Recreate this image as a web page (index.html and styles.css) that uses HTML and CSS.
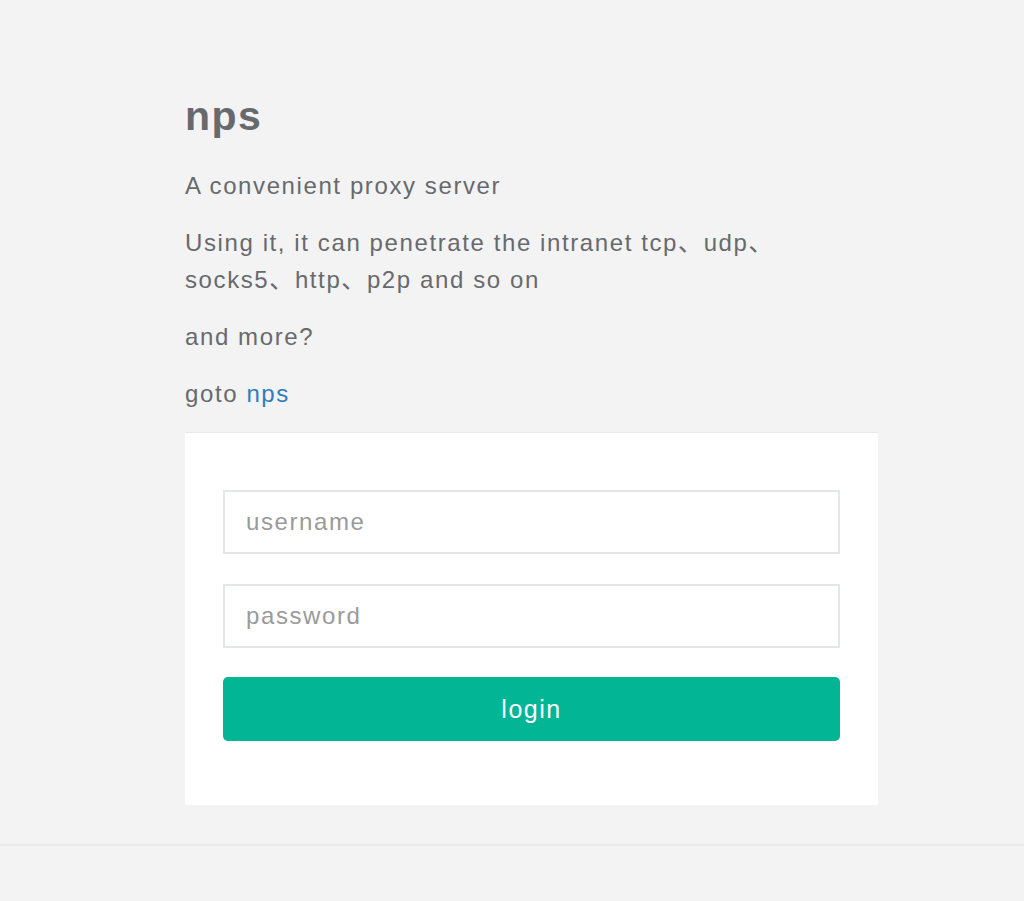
FILE: index.html
```html
<!DOCTYPE html>
<html lang="en">
  <head>
    <meta charset="utf-8">
    <title>nps</title>
    <link rel="stylesheet" href="styles.css">
  </head>
  <body>
    <div class="login-columns">
      <!-- intro text -->
      <div class="intro">
        <h2 class="brand">nps</h2>
        <p>A convenient proxy server</p>
        <p>Using it, it can penetrate the intranet tcp、udp、socks5、http、p2p and so on</p>
        <p>and more?</p>
        <p>goto <a href="#">nps</a></p>
      </div>
      <!-- login form -->
      <div class="ibox-content">
        <form class="login-form">
          <input class="form-control" type="text" name="username" placeholder="username">
          <input class="form-control" type="password" name="password" placeholder="password">
          <button class="btn-primary" type="submit">login</button>
        </form>
      </div>
    </div>
    <hr class="footer-line">
  </body>
</html>
```

FILE: styles.css
```css
body {
  margin: 0;
  background-color: #f3f3f4;
  color: #676a6c;
  font-family: "Liberation Sans", Arial, "Noto Sans CJK SC", sans-serif;
  font-size: 24px;
  letter-spacing: 1.6px;
  line-height: 37px;
}

.login-columns {
  width: 693px;
  margin-left: 185px;
  padding-top: 94px;
}

.brand {
  margin: 0 0 29px 0;
  font-size: 41px;
  line-height: 44px;
  font-weight: bold;
  letter-spacing: 1.5px;
}

.intro p {
  margin: 0 0 20px 0;
}

.intro a {
  color: #2f7dba;
  text-decoration: none;
}

.ibox-content {
  background-color: #ffffff;
  border-top: 1px solid #e7eaec;
  padding: 57px 38px 64px 38px;
}

.login-form {
  display: flex;
  flex-direction: column;
  gap: 30px;
}

.form-control {
  height: 64px;
  box-sizing: border-box;
  border: 2px solid #e5e6e7;
  padding: 0 21px;
  font-family: inherit;
  font-size: 24px;
  letter-spacing: 1.6px;
  color: #676a6c;
  background-color: #ffffff;
  outline: none;
}

.form-control::placeholder {
  color: #9a9a9a;
}

.btn-primary {
  height: 64px;
  margin-top: -1px;
  border: none;
  border-radius: 5px;
  background-color: #02b595;
  color: #ffffff;
  font-family: inherit;
  font-size: 25px;
  letter-spacing: 1.5px;
  cursor: pointer;
}

.footer-line {
  margin: 39px 0 0 0;
  border: none;
  border-top: 2px solid #ebebeb;
}
```
